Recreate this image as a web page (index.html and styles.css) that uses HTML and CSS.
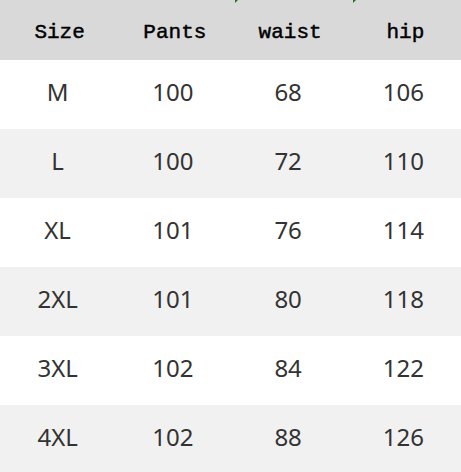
FILE: index.html
```html
<!DOCTYPE html>
<html>
<head>
<meta charset="utf-8">
<link rel="stylesheet" href="styles.css">
</head>
<body>
<div class="table">
  <div class="row head">
    <div class="cell">Size</div>
    <div class="cell">Pants</div>
    <div class="cell">waist</div>
    <div class="cell">hip</div>
    <span class="mark mark1"></span>
    <span class="mark mark2"></span>
  </div>
  <div class="row"><div class="cell">M</div><div class="cell">100</div><div class="cell">68</div><div class="cell">106</div></div>
  <div class="row alt"><div class="cell">L</div><div class="cell">100</div><div class="cell">72</div><div class="cell">110</div></div>
  <div class="row"><div class="cell">XL</div><div class="cell">101</div><div class="cell">76</div><div class="cell">114</div></div>
  <div class="row alt"><div class="cell">2XL</div><div class="cell">101</div><div class="cell">80</div><div class="cell">118</div></div>
  <div class="row"><div class="cell">3XL</div><div class="cell">102</div><div class="cell">84</div><div class="cell">122</div></div>
  <div class="row alt"><div class="cell">4XL</div><div class="cell">102</div><div class="cell">88</div><div class="cell">126</div></div>
</div>
</body>
</html>
```
FILE: styles.css
```css
html, body {
  margin: 0;
  padding: 0;
  background: #ffffff;
}
.table {
  width: 461px;
  height: 472px;
  overflow: hidden;
}
.row {
  display: grid;
  grid-template-columns: repeat(4, 1fr);
  height: 69px;
  align-items: center;
  background: #ffffff;
  font-family: "Noto Sans", sans-serif;
  font-size: 24px;
  color: #333333;
  padding-bottom: 5px;
  box-sizing: border-box;
}
.row.alt {
  background: #f1f1f1;
}
.row.head {
  position: relative;
  height: 60px;
  background: #d9d9d9;
  font-family: "Liberation Mono", monospace;
  font-weight: normal;
  font-size: 21px;
  color: #000000;
  -webkit-text-stroke: 0.45px #000000;
  padding-top: 4px;
  padding-bottom: 0;
}
.head .cell {
  padding-left: 4px;
}
.cell {
  text-align: center;
  line-height: 1;
}
.mark {
  position: absolute;
  top: 0;
  width: 0;
  height: 0;
  border-top: 3px solid #1a7a1a;
  border-right: 3px solid transparent;
}
.mark1 { left: 235px; }
.mark2 { left: 353px; }
```
